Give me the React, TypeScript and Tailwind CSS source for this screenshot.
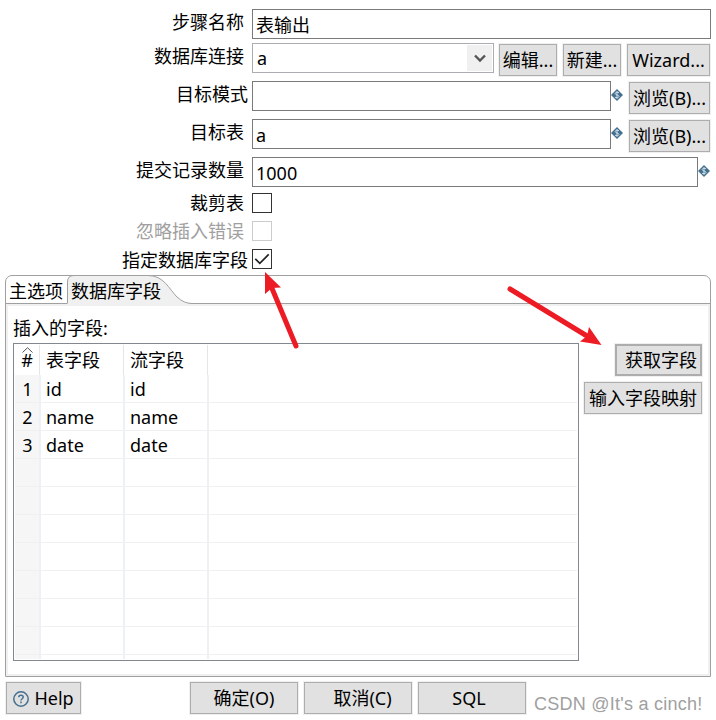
import React from "react";

function Label({ children, wide, disabled, className = "h-[26px] leading-[26px]" }: { children: string; wide?: boolean; disabled?: boolean; className?: string }) {
  return (
    <div className={`${wide ? "w-[248px] mr-1" : "w-[244px] mr-2"} shrink-0 text-right whitespace-nowrap ${disabled ? "text-[#a0a0a0]" : ""} ${className}`}>
      {children}
    </div>
  );
}

function Field({ value = "", className }: { value?: string; className: string }) {
  return (
    <div className={`h-[30px] shrink-0 border border-[#7a7a7a] bg-white pl-[3px] leading-[30px] whitespace-nowrap ${className}`}>{value}</div>
  );
}

function Button({ children, className = "" }: { children: React.ReactNode; className?: string }) {
  return (
    <button className={`flex h-8 shrink-0 items-center justify-center border border-[#adadad] bg-[#e1e1e1] pt-px whitespace-nowrap shadow-[0_0_0_1px_#f0f0f0] ${className}`}>
      {children}
    </button>
  );
}

function Variable() {
  return (
    <svg className="mt-2 h-3 w-3 shrink-0" viewBox="0 0 12 12">
      <path d="M6 0 12 6 6 12 0 6Z" fill="#44708f" />
      <path d="M8 3.8C7.2 3 4.2 2.9 4.2 4.6S8 5.8 8 7.4 4.8 9 4 8.1M6 2.2v7.6" fill="none" stroke="#d5e2eb" strokeWidth="1" />
    </svg>
  );
}

function Check({ checked, disabled }: { checked?: boolean; disabled?: boolean }) {
  return (
    <div className={`h-5 w-5 shrink-0 border bg-white ${disabled ? "border-[#cccccc]" : "border-[#333333]"}`}>
      {checked && (
        <svg className="h-[18px] w-[18px]" viewBox="0 0 18 18" fill="none" stroke="#222" strokeWidth="1.7">
          <path d="M2.3 8.8 6.8 13.3 15.7 4.4" />
        </svg>
      )}
    </div>
  );
}

const rows = [
  ["1", "id", "id"],
  ["2", "name", "name"],
  ["3", "date", "date"],
  ["", "", ""],
  ["", "", ""],
  ["", "", ""],
  ["", "", ""],
  ["", "", ""],
  ["", "", ""],
  ["", "", ""],
];

function Table() {
  return (
    <div className="flex h-[318px] w-[566px] flex-col overflow-hidden border border-[#828790] bg-white p-px">
      <div className="flex h-[30px] shrink-0 leading-[31px]">
        <div className="relative w-[25px] border-r border-[#e5e5e5] text-center">
          #
          <svg className="absolute top-[2px] left-[7px] h-[6px] w-[11px]" viewBox="0 0 11 6" fill="none" stroke="#555">
            <path d="M.5 5.5 5.5.7 10.5 5.5" />
          </svg>
        </div>
        <div className="w-[84px] border-r border-[#e5e5e5] pl-[6px]">表字段</div>
        <div className="w-[84px] border-r border-[#e5e5e5] pl-[6px]">流字段</div>
      </div>
      {rows.map((r, i) => (
        <div key={i} className="flex h-7 shrink-0 leading-7">
          <div className="h-7 w-6 border-b border-[#f0f0f0] bg-[#f6f6f6] pl-[1px] text-center">{r[0]}</div>
          <div className="h-7 w-[2px] bg-[#edf1f6]" />
          <div className="h-7 w-[82px] border-b border-[#f0f0f0] pl-[5px]">{r[1]}</div>
          <div className="h-7 w-[2px] bg-[#edf1f6]" />
          <div className="h-7 w-[82px] border-b border-[#f0f0f0] pl-[5px]">{r[2]}</div>
          <div className="h-7 w-[2px] bg-[#edf1f6]" />
          <div className="h-7 flex-1 border-b border-[#f0f0f0]" />
        </div>
      ))}
      <div className="flex h-1 shrink-0">
        <div className="w-6 bg-[#f6f6f6]" />
        <div className="mr-[82px] w-[2px] bg-[#edf1f6]" />
        <div className="mr-[82px] w-[2px] bg-[#edf1f6]" />
        <div className="w-[2px] bg-[#edf1f6]" />
      </div>
    </div>
  );
}

export default function App() {
  return (
    <div className="relative flex h-[720px] w-[716px] flex-col overflow-hidden bg-white pt-[9px] font-['Noto_Sans','Noto_Sans_CJK_SC',sans-serif] text-[18px] text-black">
      <div className="flex h-[34px] items-start">
        <Label>步骤名称</Label>
        <Field className="w-[459px]" value="表输出" />
      </div>
      <div className="flex h-[38px] items-start">
        <Label>数据库连接</Label>
        <div className="flex h-[30px] w-[242px] shrink-0 justify-between border border-[#abadb3] p-px pl-1 leading-[26px]">
          a
          <div className="flex h-[26px] w-[25px] items-center justify-center bg-[#f0f0f0]">
            <svg className="h-[9px] w-[12px]" viewBox="0 0 12 9" fill="none" stroke="#555" strokeWidth="2.4">
              <path d="M1 1.5 6 6.5 11 1.5" />
            </svg>
          </div>
        </div>
        <Button className="mt-px ml-[5px] w-[58px]">编辑...</Button>
        <Button className="mt-px ml-[6px] w-[58px]">新建...</Button>
        <Button className="mt-px ml-[6px] w-[83px]">Wizard...</Button>
      </div>
      <div className="flex h-[38px] items-start">
        <Label wide>目标模式</Label>
        <Field className="w-[359px]" />
        <Variable />
        <Button className="mt-px ml-[6px] w-[81px]">浏览(B)...</Button>
      </div>
      <div className="flex h-[38px] items-start">
        <Label>目标表</Label>
        <Field className="w-[359px]" value="a" />
        <Variable />
        <Button className="mt-px ml-[6px] w-[81px]">浏览(B)...</Button>
      </div>
      <div className="flex h-9 items-start">
        <Label>提交记录数量</Label>
        <Field className="w-[446px]" value="1000" />
        <Variable />
      </div>
      <div className="flex h-7 items-start">
        <Label className="h-5 leading-5">裁剪表</Label>
        <Check />
      </div>
      <div className="flex h-7 items-start">
        <Label disabled className="h-5 leading-5">忽略插入错误</Label>
        <Check disabled />
      </div>
      <div className="flex h-[26px] items-start">
        <Label wide className="h-5 leading-[22px]">指定数据库字段</Label>
        <Check checked />
      </div>

      <div className="ml-[5px] flex h-[402px] w-[706px] shrink-0 flex-col rounded-t-[7px] border border-[#a0a0a0]">
        <div className="relative flex h-[28px] shrink-0 border-b border-[#a0a0a0] leading-[30px]">
          <svg className="absolute -top-px left-[61px] h-[29px] w-[130px]" viewBox="0 0 130 29">
            <path d="M.5 29V7Q.5.5 7 .5H81C97 .5 102 14 110 22Q117 28.5 125 28.5V29Z" fill="#f0f0f0" />
            <path d="M.5 28V7Q.5.5 7 .5H81C97 .5 102 14 110 22Q117 28.5 125 28.5" fill="none" stroke="#a0a0a0" />
          </svg>
          <div className="relative w-[62px] pl-[3px]">主选项</div>
          <div className="relative pl-[3px]">数据库字段</div>
        </div>
        <div className="flex flex-1 flex-col border-2 border-[#f0f0f0] pl-[5px]">
          <div className="h-[37px] leading-[44px]">插入的字段:</div>
          <div className="flex">
            <Table />
            <div className="flex flex-1 flex-col items-end pr-[6px]">
              <Button className="mt-[1px] w-[87px] border-2 border-[#0078d7] pl-[5px]">获取字段</Button>
              <Button className="mt-[6px] w-[118px]">输入字段映射</Button>
            </div>
          </div>
        </div>
      </div>

      <div className="mt-[5px] ml-[6px] flex h-8 shrink-0 items-start">
        <Button className="w-[75px] gap-[5px]">
          <svg className="h-4 w-4" viewBox="0 0 16 16" fill="none" stroke="#44708f" strokeWidth="1.5">
            <circle cx="8" cy="8" r="7.2" />
            <path d="M5.8 6.3C5.8 3.6 10.2 3.7 10.2 6.2 10.2 7.7 8 7.8 8 9.5M8 10.6v1.6" />
          </svg>
          Help
        </Button>
        <Button className="ml-[109px] w-[108px]">确定(O)</Button>
        <Button className="ml-[6px] w-[108px] pl-[9px]">取消(C)</Button>
        <Button className="ml-[6px] w-[108px] pr-[6px]">SQL</Button>
        <div className="ml-2 pt-[9px] font-['Liberation_Sans',sans-serif] text-[18px] leading-[26px] tracking-[0.25px] whitespace-nowrap text-[#a0a0a0]">CSDN @It's a cinch!</div>
      </div>

      <svg className="pointer-events-none absolute top-0 left-0 h-[720px] w-[716px]" viewBox="0 0 716 720" fill="#ed1c24" stroke="#ed1c24">
        <path d="M296 346 271 286M510 289 587 336" strokeWidth="5" strokeLinecap="round" fill="none" />
        <path d="M265 272 281 287.5 272 288 265 294ZM601.500 345 580 341.500 587 336 589 327Z" stroke="none" />
      </svg>
    </div>
  );
}
